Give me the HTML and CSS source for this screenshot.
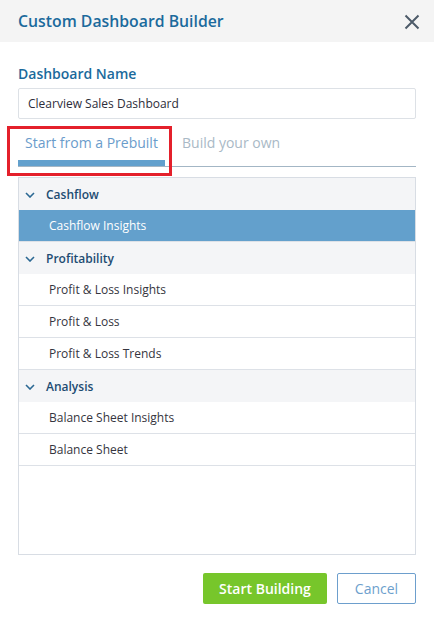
FILE: index.html
```html
<!DOCTYPE html>
<html>
<head>
<meta charset="utf-8">
<link rel="stylesheet" href="styles.css">
</head>
<body>
<div class="dialog">
  <div class="header">
    <span class="title">Custom Dashboard Builder</span>
    <svg class="close" width="16" height="16" viewBox="0 0 16 16"><path d="M1.5 1.5 L14.5 14.5 M14.5 1.5 L1.5 14.5" stroke="#4d5b69" stroke-width="2" fill="none"/></svg>
  </div>
  <div class="body">
    <div class="label">Dashboard Name</div>
    <div class="input">Clearview Sales Dashboard</div>
    <div class="tabs">
      <div class="tab active">Start from a Prebuilt</div>
      <div class="tab">Build your own</div>
      <div class="highlight"></div>
    </div>
    <div class="list">
      <div class="group"><svg class="chev" width="10" height="6" viewBox="0 0 10 6"><path d="M1 1 L5 5 L9 1" stroke="#2b6893" stroke-width="1.6" fill="none"/></svg>Cashflow</div>
      <div class="item selected">Cashflow Insights</div>
      <div class="group"><svg class="chev" width="10" height="6" viewBox="0 0 10 6"><path d="M1 1 L5 5 L9 1" stroke="#2b6893" stroke-width="1.6" fill="none"/></svg>Profitability</div>
      <div class="item">Profit &amp; Loss Insights</div>
      <div class="item">Profit &amp; Loss</div>
      <div class="item">Profit &amp; Loss Trends</div>
      <div class="group"><svg class="chev" width="10" height="6" viewBox="0 0 10 6"><path d="M1 1 L5 5 L9 1" stroke="#2b6893" stroke-width="1.6" fill="none"/></svg>Analysis</div>
      <div class="item">Balance Sheet Insights</div>
      <div class="item">Balance Sheet</div>
    </div>
    <div class="actions">
      <button class="btn primary">Start Building</button>
      <button class="btn secondary">Cancel</button>
    </div>
  </div>
</div>
</body>
</html>
```
FILE: styles.css
```css
* { box-sizing: border-box; }
html, body { margin: 0; padding: 0; background: #fff; }
body { font-family: "Open Sans", "Noto Sans", sans-serif; width: 434px; height: 617px; overflow: hidden; }
.header {
  height: 42px;
  background: #f4f4f4;
  display: flex;
  align-items: center;
  justify-content: space-between;
  padding: 0 14px 0 18px;
}
.title { font-size: 15.8px; font-weight: 600; color: #1b6a9c; line-height: 22px; }
.close { display: block; margin-top: 1px; }
.body { padding: 22px 18px 0 18px; }
.label { font-size: 14px; font-weight: 600; color: #1b6a9c; line-height: 20px; }
.input {
  margin-top: 4px;
  height: 31px;
  border: 1px solid #dde1e6;
  border-radius: 2px;
  font-size: 12px;
  color: #2d2d3a;
  line-height: 29px;
  padding-left: 9px;
}
.tabs {
  position: relative;
  display: flex;
  border-bottom: 1px solid #a3b6c5;
  height: 48px;
}
.tab {
  font-size: 14px;
  line-height: 20px;
  padding: 14px 0 0 0;
  color: #a9b9c6;
}
.tab.active {
  width: 147px;
  padding-left: 7px;
  color: #6a9ccb;
  font-weight: 500;
  border-bottom: 6px solid #62a0cd;
}
.tab + .tab { margin-left: 17px; }
.highlight {
  position: absolute;
  left: -11px;
  top: 7px;
  width: 165px;
  height: 50px;
  border: 3px solid #e4202b;
}
.list {
  margin-top: 10px;
  height: 378px;
  border: 1px solid #d8dde4;
}
.group, .item {
  height: 32px;
  display: flex;
  align-items: center;
  font-size: 12px;
}
.group {
  background: #f4f5f7;
  color: #1d4c72;
  font-weight: 600;
  padding-left: 6px;
}
.chev { margin-right: 11px; margin-top: 1px; }
.item {
  color: #353540;
  padding-left: 30px;
  border-bottom: 1px solid #dde1e7;
}
.item.selected { background: #63a0cc; color: #fff; }
.actions {
  display: flex;
  justify-content: flex-end;
  gap: 10px;
  margin-top: 18px;
}
.btn {
  height: 31px;
  font-family: inherit;
  font-size: 14px;
  border-radius: 2px;
  padding: 0;
}
.primary {
  width: 124px;
  background: #77c62b;
  border: none;
  color: #fff;
  font-weight: 600;
}
.secondary {
  width: 79px;
  background: #fff;
  border: 1px solid #6d9fcd;
  color: #6d9fcd;
}
```
